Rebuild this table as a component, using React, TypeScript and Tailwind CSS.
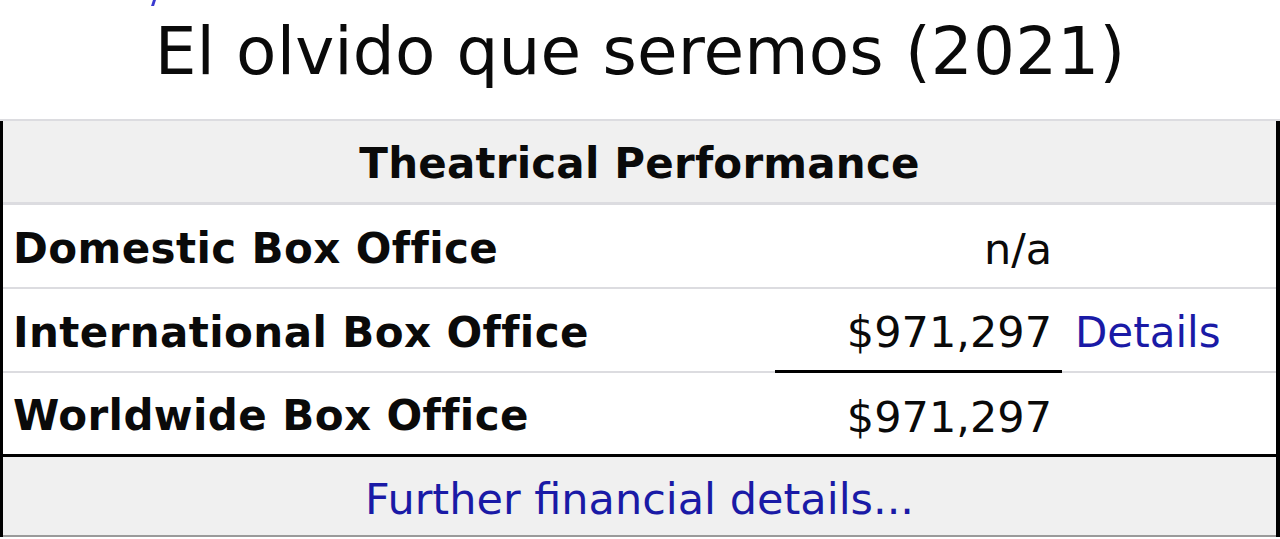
import React from "react";

const font = { fontFamily: '"DejaVu Sans", Verdana, sans-serif' };

type Row = {
  label: string;
  value: string;
  details?: string;
  underline?: boolean;
};

const rows: Row[] = [
  { label: "Domestic Box Office", value: "n/a" },
  { label: "International Box Office", value: "$971,297", details: "Details", underline: true },
  { label: "Worldwide Box Office", value: "$971,297" },
];

export default function App() {
  return (
    <div className="h-[539px] w-[1280px] overflow-hidden bg-white text-[#0a0a0a]" style={font}>
      {/* breadcrumb, scrolled off the top: only a sliver of the link separator shows */}
      <div className="h-[8px] pl-[152px]">
        <div className="h-[6px] w-[3px] skew-x-[-18deg] bg-[#3a3ad0]" />
      </div>

      <div className="h-[111px] pt-[5px] text-center">
        <h1 className="text-[66px] font-normal leading-[77px] tracking-[0.15px]">El olvido que seremos (2021)</h1>
      </div>

      <div className="border-t-[2px] border-[#dcdce0]">
        <div className="border-r-[4px] border-l-[3px] border-black">
          <div className="flex h-[84px] items-center justify-center border-b-[3px] border-[#dcdce0] bg-[#f0f0f0] pt-[4px]">
            <span className="text-[42px] font-bold leading-none tracking-[0.2px]">Theatrical Performance</span>
          </div>

          {rows.map((row, i) => (
            <div
              key={row.label}
              className={
                "grid h-[84px] grid-cols-[772px_287px_1fr] " +
                (i === rows.length - 1 ? "border-b-[3px] border-black" : "border-b-[2px] border-[#dcdce0]")
              }
            >
              <div className="flex items-center pl-[10px] pt-[5px]">
                <span className="text-[42px] font-bold leading-none tracking-[0.4px]">{row.label}</span>
              </div>
              <div
                className={
                  "-mb-[2px] flex items-center justify-end pr-[10px] pt-[5px] " +
                  (row.underline ? "border-b-[3px] border-black" : "")
                }
              >
                <span className="text-[43px] leading-none">{row.value}</span>
              </div>
              <div className="flex items-center pl-[13px] pt-[5px]">
                {row.details && <span className="text-[42px] leading-none text-[#1a1aa6]">{row.details}</span>}
              </div>
            </div>
          ))}

          <div className="flex h-[80px] items-center justify-center border-b-[2px] border-[#9a9a9a] bg-[#f0f0f0] pt-[6px]">
            <span className="text-[43px] leading-none text-[#1a1aa6]">Further financial details...</span>
          </div>
        </div>
      </div>
    </div>
  );
}
